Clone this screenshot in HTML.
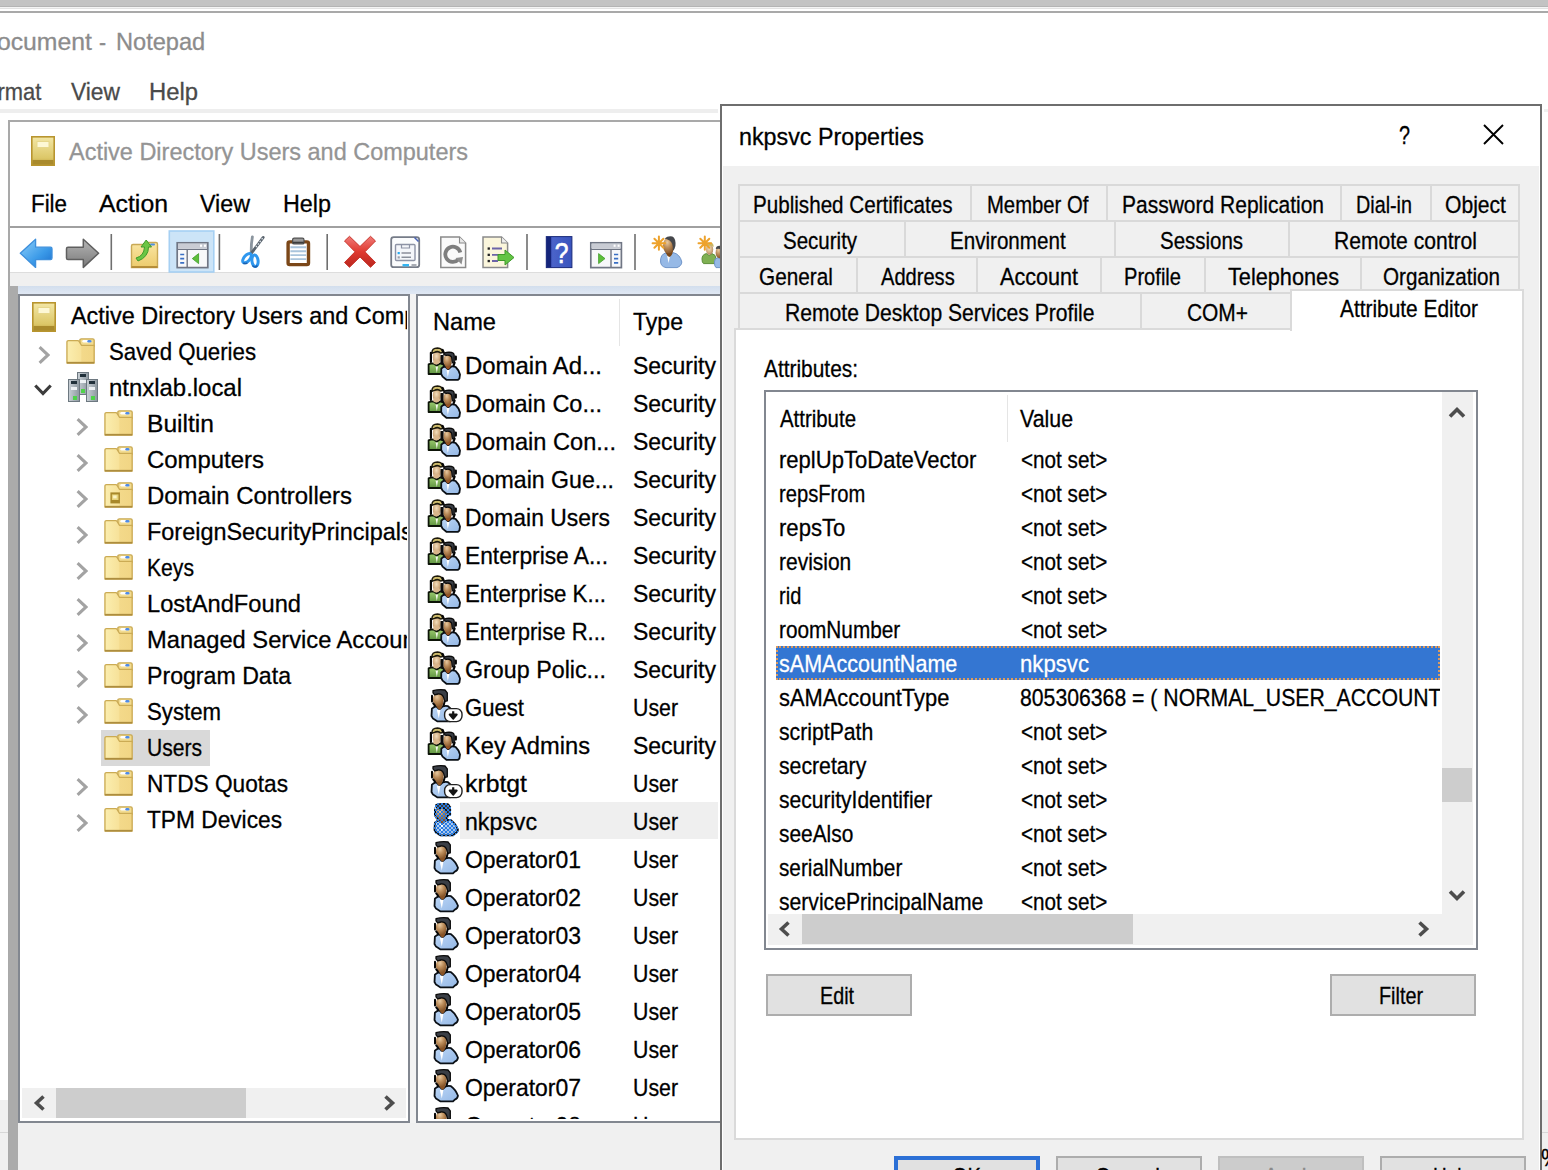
<!DOCTYPE html>
<html lang="en">
<head>
<meta charset="utf-8">
<title>nkpsvc Properties</title>
<style>
html,body{margin:0;padding:0;}
body{width:1548px;height:1170px;overflow:hidden;background:#fff;position:relative;font-family:"Liberation Sans",sans-serif;color:#000;}
.L{position:absolute;left:0;top:0;overflow:hidden;}
.b{position:absolute;box-sizing:border-box;}
.t{position:absolute;white-space:pre;transform-origin:0 50%;font-size:24.2px;line-height:24.2px;display:block;-webkit-text-stroke-width:0.3px;}
.t.dlg{font-size:24.3px;line-height:24.3px;}
svg.i{position:absolute;overflow:visible;}
</style>
</head>
<body>
<svg width="0" height="0" style="position:absolute">
<defs>
<linearGradient id="gGold" x1="0" y1="0" x2="0" y2="1"><stop offset="0" stop-color="#f3e7a6"/><stop offset="0.75" stop-color="#dcc768"/><stop offset="1" stop-color="#b99a35"/></linearGradient>
<linearGradient id="gFold" x1="0" y1="0" x2="0" y2="1"><stop offset="0" stop-color="#f9e6a4"/><stop offset="1" stop-color="#edcb6c"/></linearGradient>
<linearGradient id="gBlueArrow" x1="0" y1="0" x2="0" y2="1"><stop offset="0" stop-color="#7cc4f5"/><stop offset="1" stop-color="#1f7fd6"/></linearGradient>
<linearGradient id="gGrayArrow" x1="0" y1="0" x2="0" y2="1"><stop offset="0" stop-color="#a8a8a8"/><stop offset="1" stop-color="#6e6e6e"/></linearGradient>
<linearGradient id="gBody" x1="0" y1="0" x2="0" y2="1"><stop offset="0" stop-color="#c3d8f0"/><stop offset="1" stop-color="#8fb1da"/></linearGradient>
<linearGradient id="gBodyG" x1="0" y1="0" x2="0" y2="1"><stop offset="0" stop-color="#a9cf8a"/><stop offset="1" stop-color="#6fa24c"/></linearGradient>
<linearGradient id="gSrv" x1="0" y1="0" x2="1" y2="0"><stop offset="0" stop-color="#c9d0d6"/><stop offset="1" stop-color="#8c979f"/></linearGradient>
<!-- folder 28x26 -->
<linearGradient id="gFoldH" x1="0" y1="0" x2="1" y2="0"><stop offset="0" stop-color="#fbeeb0"/><stop offset="0.5" stop-color="#f7e29a"/><stop offset="0.55" stop-color="#f3d98a"/><stop offset="1" stop-color="#f1d584"/></linearGradient>
<symbol id="folder" viewBox="0 0 28 26" preserveAspectRatio="none">
<path d="M13.4 8 V2.2 Q13.4 0.9 14.8 0.9 H25.8 Q27.2 0.9 27.2 2.2 V8 Z" fill="#f3dc90" stroke="#c9a952" stroke-width="1.3"/>
<rect x="15.8" y="1.9" width="8.6" height="2.7" rx="1.3" fill="#fff"/><rect x="20.6" y="1.9" width="4" height="2.7" rx="1.3" fill="#4f8be6"/>
<path d="M0.9 25 V4 Q0.9 2.6 2.4 2.6 H11.4 Q12.3 2.6 12.8 3.6 L14.9 7.3 H27.2 V25 Z" fill="url(#gFoldH)" stroke="#cbab54" stroke-width="1.3" stroke-linejoin="round"/>
<path d="M0.9 24.7 H27.2" stroke="#ad8d3e" stroke-width="1.7"/>
</symbol>
<symbol id="folderdc" viewBox="0 0 28 26" preserveAspectRatio="none">
<use href="#folder" width="28" height="26"/>
<rect x="6.2" y="10.4" width="9.2" height="11" fill="#a8882a"/><rect x="7.6" y="12.4" width="6.4" height="5.6" fill="#e6d27a"/><rect x="8.8" y="13.4" width="3.4" height="3" fill="#fbf4c4"/>
</symbol>
<!-- root icon 24x30 -->
<symbol id="root" viewBox="0 0 24 30">
<rect x="0.8" y="0.8" width="22.4" height="28.4" fill="url(#gGold)" stroke="#b8952f" stroke-width="1.6"/>
<rect x="1.6" y="24" width="20.8" height="4.5" fill="#a98a2c"/>
<rect x="6" y="5.5" width="12" height="6" fill="#fdf8d6" stroke="#e6d78c" stroke-width="1"/>
</symbol>
<!-- domain 30x30 -->
<symbol id="domain" viewBox="0 0 30 30">
<g stroke="#6d7880" stroke-width="1">
<rect x="9.5" y="0.5" width="11" height="22" fill="url(#gSrv)"/>
<rect x="0.5" y="7.5" width="11" height="22" fill="url(#gSrv)"/>
<rect x="18.5" y="7.5" width="11" height="22" fill="url(#gSrv)"/>
</g>
<rect x="12" y="2" width="6" height="3" fill="#20303a"/><rect x="3" y="9" width="6" height="3" fill="#20303a"/><rect x="21" y="9" width="6" height="3" fill="#20303a"/>
<rect x="12" y="8" width="6" height="3" fill="#eef2f5"/><rect x="3" y="15" width="6" height="3" fill="#eef2f5"/><rect x="21" y="15" width="6" height="3" fill="#eef2f5"/>
<rect x="13" y="17" width="4" height="4" fill="#4fd24a"/><rect x="5" y="24" width="4" height="4" fill="#4fd24a"/><rect x="23" y="24" width="4" height="4" fill="#4fd24a"/>
</symbol>
<!-- user 26x34 -->
<radialGradient id="gFace" cx="0.38" cy="0.3" r="0.8"><stop offset="0" stop-color="#e8c9a0"/><stop offset="0.45" stop-color="#b98a58"/><stop offset="1" stop-color="#7a4a20"/></radialGradient>
<radialGradient id="gFaceL" cx="0.45" cy="0.4" r="0.75"><stop offset="0" stop-color="#f3ddbc"/><stop offset="0.55" stop-color="#cfa97c"/><stop offset="1" stop-color="#8f6a44"/></radialGradient>
<linearGradient id="gBody2" x1="0" y1="0" x2="1" y2="1"><stop offset="0" stop-color="#bcd6f6"/><stop offset="1" stop-color="#94b8e6"/></linearGradient>
<linearGradient id="gBodyG2" x1="0" y1="0" x2="0" y2="1"><stop offset="0" stop-color="#9ccc70"/><stop offset="1" stop-color="#5f9440"/></linearGradient>
<symbol id="user" viewBox="0 0 26 34">
<path d="M1.9 19.6 Q4 17.7 6.2 17.4 L9.5 20.4 L12.8 17.4 Q15.5 16.5 18 17.2 Q22.6 20.5 25 26.7 Q24.6 29.6 21.8 30.6 L20 32.4 H7.6 L3 29.6 L1.5 27 Z" fill="url(#gBody2)" stroke="#0b1016" stroke-width="1.8" stroke-linejoin="round"/>
<path d="M6.9 21 L8.8 29.5 L10.4 20.8 Z" fill="#fff"/>
<path d="M5.6 14.5 Q7 20 9.6 20.8 Q12.2 19.5 13.2 13.5 Z" fill="#8a5426"/>
<ellipse cx="8.3" cy="10.7" rx="5.4" ry="6.9" fill="url(#gFace)"/>
<path d="M3 1.7 Q9 0.2 15 1 L17.3 3.8 V11.8 L14.9 12.4 L13.3 7.6 Q11.6 4.6 8 5 L4.6 5.8 L3 3.8 Z" fill="#3a3e45" stroke="#0a0a0a" stroke-width="1.3" stroke-linejoin="round"/>
<path d="M2 6.8 V12.6 M3.2 14.4 L5 16.6 M14.6 12.8 L13.6 16.4" stroke="#050505" stroke-width="2" fill="none" stroke-linecap="round"/>
</symbol>
<pattern id="dither" width="4" height="4" patternUnits="userSpaceOnUse"><rect x="0" y="0" width="2" height="2" fill="#2a7de2"/><rect x="2" y="2" width="2" height="2" fill="#2a7de2"/></pattern>
<symbol id="usersel" viewBox="0 0 26 34">
<use href="#user" width="26" height="34"/>
<g fill="url(#dither)" stroke="url(#dither)" stroke-width="1.8" stroke-linejoin="round">
<path d="M1.9 19.6 Q4 17.7 6.2 17.4 L9.5 20.4 L12.8 17.4 Q15.5 16.5 18 17.2 Q22.6 20.5 25 26.7 Q24.6 29.6 21.8 30.6 L20 32.4 H7.6 L3 29.6 L1.5 27 Z"/>
<path d="M2 6.8 L3 1.7 Q9 0.2 15 1 L17.3 3.8 V11.8 L14.6 12.8 L13.6 17 L9.6 20.8 L5 16.6 L2 12.6 Z"/>
</g>
</symbol>
<!-- group 34x34 -->
<symbol id="group" viewBox="0 0 34 34">
<path d="M1.6 17.4 Q3.5 16.4 6.4 16.4 L9.8 18.6 L13 16.4 Q15.5 16.4 17 17.4 V27 H1.6 Z" fill="url(#gBodyG2)" stroke="#0d1408" stroke-width="1.8" stroke-linejoin="round"/>
<path d="M8.6 19.5 L9.8 26 L11 19.5 Z" fill="#f4f8ee"/>
<ellipse cx="9.8" cy="10.4" rx="4" ry="6.4" fill="url(#gFaceL)"/>
<path d="M6 16 Q9.8 19.5 13 15 L12 13 H7 Z" fill="#d9b58b"/>
<path d="M5 6.2 Q4.6 1 10.5 0.9 Q15.6 1 15.6 5.6 L13.6 6 Q11 3.6 7.4 5.4 Z" fill="#cdbb6c" stroke="#1c180a" stroke-width="1.5" stroke-linejoin="round"/>
<path d="M3.9 5.8 V15 M15.6 3 L16.8 5.6" stroke="#070707" stroke-width="2.2" fill="none" stroke-linecap="round"/><path d="M13.6 8 L16.6 8 L16.8 19 L13.4 17 Z" fill="#0c0c0c"/>
<path d="M14.3 21.6 Q16 19.8 18.2 19.5 L21.2 22.3 L24.4 19.5 Q27 19.2 28.6 20 Q31.6 22.6 33 27.5 L32.4 31.6 L31 32.8 H19.4 L15.6 29.6 L14.2 27 Z" fill="url(#gBody2)" stroke="#0b1016" stroke-width="1.8" stroke-linejoin="round"/>
<path d="M19.6 23 L20.8 30 L22.4 23 Z" fill="#fff"/>
<path d="M17.6 17 Q19 22 21.2 22.6 Q23.6 21.4 24.6 16 Z" fill="#96501f"/>
<ellipse cx="20.7" cy="13.4" rx="4.1" ry="6.4" fill="url(#gFace)"/>
<path d="M16.8 7.6 Q17 5.2 22 5.2 Q27.2 5.4 27.2 8.4 V15.6 L25.4 15.8 L24.6 10 Q22.6 7.6 19.4 8.4 Z" fill="#3a3e45" stroke="#0a0a0a" stroke-width="1.3" stroke-linejoin="round"/>
<path d="M28.8 9.6 V12.6 M27.6 15.6 L26.6 18.4" stroke="#050505" stroke-width="2.2" fill="none" stroke-linecap="round"/>
</symbol>
<symbol id="userg" viewBox="0 0 18 28">
<path d="M1.6 17.4 Q3.5 16.4 6.4 16.4 L9.8 18.6 L13 16.4 Q15.5 16.4 17 17.4 V27 H1.6 Z" fill="url(#gBodyG2)" stroke="#0d1408" stroke-width="1.8" stroke-linejoin="round"/>
<ellipse cx="9.8" cy="10.4" rx="4" ry="6.4" fill="url(#gFaceL)"/>
<path d="M5 6.2 Q4.6 1 10.5 0.9 Q15.6 1 15.6 5.6 L13.6 6 Q11 3.6 7.4 5.4 Z" fill="#dccb7e" stroke="#2a2410" stroke-width="1.2"/>
</symbol>
<!-- disabled user 34x34 -->
<symbol id="userd" viewBox="0 0 34 34">
<use href="#user" x="0" y="0" width="26" height="34"/>
<rect x="14.6" y="19.6" width="17.4" height="13" rx="5.5" fill="#fff" stroke="#222" stroke-width="1.4"/>
<path d="M23.2 22.3 V27 M19.8 25.6 L23.2 29.6 L26.6 25.6 Z" stroke="#151515" stroke-width="2.2" fill="#151515" stroke-linejoin="round"/>
</symbol>
<symbol id="chevR" viewBox="0 0 12 18"><path d="M1.6 1.2 L10 9 L1.6 16.8" fill="none" stroke="#a3a3a3" stroke-width="3.1"/></symbol>
<symbol id="chevD" viewBox="0 0 18 12"><path d="M1.3 1.5 L9 9.6 L16.7 1.5" fill="none" stroke="#3c3c3c" stroke-width="3.1"/></symbol>
</defs>
</svg>

<div class="L" style="width:1548px;height:1170px"><div class="b" style="left:0px;top:0px;width:1548px;height:6px;background:#c3c3c3;"></div>
<div class="b" style="left:0px;top:6px;width:1548px;height:1px;background:#b4b4b4;"></div>
<div class="b" style="left:0px;top:7px;width:1548px;height:1px;background:#f4f4f4;"></div>
<div class="b" style="left:0px;top:8px;width:1548px;height:1px;background:#e2e2e2;"></div>
<div class="b" style="left:0px;top:11px;width:1548px;height:2px;background:#a9a9a9;"></div>
<div class="b" style="left:0px;top:108.5px;width:718px;height:4px;background:#eeeeee;"></div>
<div class="b" style="left:1544px;top:109px;width:4px;height:3px;background:#f0f0f0;"></div>
<div class="b" style="left:0px;top:1100px;width:9px;height:70px;background:#f0f0f0;"></div>
<div class="b" style="left:0px;top:1132px;width:9px;height:1px;background:#d7d7d7;"></div>
<div class="b" style="left:1542px;top:1100px;width:6px;height:70px;background:#f0f0f0;"></div>
<div class="b" style="left:1542px;top:1132px;width:6px;height:1px;background:#d7d7d7;"></div>
<div class="b" style="left:8.4px;top:120.3px;width:1400px;height:1060px;background:#fff;border:2px solid #a9a9a9;"></div>
<svg class="i" style="left:30.5px;top:136.4px" width="24" height="30"><use href="#root" width="24" height="30"/></svg>
<div class="b" style="left:10px;top:226px;width:1396px;height:2px;background:#a0a0a0;"></div>
<div class="b" style="left:10px;top:272px;width:1396px;height:1.7px;background:#dddddd;"></div>
<div class="b" style="left:10px;top:273px;width:1396px;height:13px;background:#f0f0f0;"></div>
<div class="b" style="left:8.5px;top:286px;width:9.5px;height:900px;background:#ababab;"></div>
<div class="b" style="left:18px;top:286px;width:1388px;height:8.3px;background:linear-gradient(#d2deed,#e0e8f4);"></div>
<div class="b" style="left:18px;top:1123px;width:1388px;height:60px;background:#f0f0f0;"></div>
<div class="b" style="left:410px;top:294px;width:6px;height:829px;background:#f3f3f3;"></div>
<div class="b" style="left:18px;top:294px;width:392px;height:829px;background:#fff;border:2px solid #828790;"></div>
<div class="b" style="left:416px;top:294px;width:900px;height:829px;background:#fff;border:2px solid #828790;"></div>
<!-- toolbar -->
<svg class="i" style="left:0;top:228px" width="722" height="46" viewBox="0 228 722 46">
<defs>
<linearGradient id="tbX" x1="0" y1="0" x2="0" y2="1"><stop offset="0" stop-color="#f07b78"/><stop offset="0.5" stop-color="#e03a30"/><stop offset="1" stop-color="#b8261e"/></linearGradient>
<linearGradient id="tbHelp" x1="0" y1="0" x2="1" y2="0"><stop offset="0" stop-color="#1b2f8c"/><stop offset="0.25" stop-color="#4a63c9"/><stop offset="1" stop-color="#3953bd"/></linearGradient>
<linearGradient id="tbBack" x1="0" y1="0" x2="1" y2="1"><stop offset="0" stop-color="#8fd0fa"/><stop offset="0.6" stop-color="#3b9ae8"/><stop offset="1" stop-color="#1c6fcc"/></linearGradient>
<linearGradient id="tbFwd" x1="0" y1="0" x2="0" y2="1"><stop offset="0" stop-color="#b5b5b5"/><stop offset="1" stop-color="#7a7a7a"/></linearGradient>
</defs>
<!-- back -->
<path d="M20.3 253.2 L35.6 239.2 V247.2 H50.5 Q52 247.2 52 248.8 V258 Q52 259.6 50.5 259.6 H35.6 V267.4 Z" fill="url(#tbBack)" stroke="#3d8fdc" stroke-width="1.3" stroke-linejoin="round"/>
<!-- forward -->
<path d="M98.6 253.2 L83.3 239.2 V247.2 H68 Q66.5 247.2 66.5 248.8 V258 Q66.5 259.6 68 259.6 H83.3 V267.4 Z" fill="url(#tbFwd)" stroke="#5f5f5f" stroke-width="1.5" stroke-linejoin="round"/>
<!-- separators -->
<g stroke="#6f6f6f" stroke-width="1.6">
<path d="M111.3 234 V270"/><path d="M219.4 234 V270"/><path d="M327.2 234 V270"/><path d="M527 234 V270"/><path d="M635 234 V270"/>
</g>
<!-- up folder -->
<path d="M131.5 267.5 V246 Q131.5 244.5 133 244.5 H143 L146 242.5 H156 Q157.5 242.5 157.5 244 V267.5 Z" fill="url(#gFold)" stroke="#c9a956" stroke-width="1.4"/>
<path d="M131.5 267 H157.5" stroke="#b18a35" stroke-width="1.8"/>
<rect x="150" y="243.6" width="5" height="2" rx="1" fill="#4f8fe0"/>
<path d="M136 258 Q144 256 144.5 247 H141 L146.2 240 L151.5 247 H148.5 Q148.5 257 138 261 Z" fill="#6cc644" stroke="#3f9a2a" stroke-width="1"/>
<!-- selected button -->
<rect x="169.3" y="231" width="44.5" height="41" fill="#cce4f7" stroke="#a6d0f3" stroke-width="1.6"/>
<g>
<rect x="177.2" y="242.8" width="30.6" height="24.8" fill="#f7f8fa" stroke="#707684" stroke-width="1.7"/>
<rect x="178" y="243.6" width="29" height="4.6" fill="#c9ccd4"/>
<path d="M177.2 249.4 H207.8 M187.2 250 V267" stroke="#707684" stroke-width="1.4"/>
<rect x="200" y="244.6" width="2" height="2.2" fill="#fff"/><rect x="204" y="244.6" width="2" height="2.2" fill="#fff"/>
<path d="M180.2 254.5 H184.2 M180.2 258.7 H184.2 M180.2 262.9 H184.2" stroke="#3a6fc4" stroke-width="1.7"/>
<path d="M192.3 258.6 L198.6 253.6 V263.6 Z" fill="#5cbf3a" stroke="#3f9a2a" stroke-width="0.8"/>
</g>
<!-- scissors -->
<path d="M252.4 236.8 Q251 244 251.2 252.5" stroke="#8a949e" stroke-width="2.8" stroke-linecap="round" fill="none"/>
<path d="M263.2 237.4 L251.4 253.2" stroke="#59636d" stroke-width="2.8" stroke-linecap="round"/>
<path d="M262.6 238.2 L255 248.4" stroke="#e8eef3" stroke-width="1.2" stroke-dasharray="1.6 1.6"/>
<ellipse cx="247" cy="258.2" rx="5.6" ry="2.9" transform="rotate(-48 247 258.2)" fill="#fff" stroke="#2f97ee" stroke-width="3"/>
<ellipse cx="255" cy="260.8" rx="3.1" ry="5.8" transform="rotate(-6 255 260.8)" fill="#fff" stroke="#2f97ee" stroke-width="3"/>
<path d="M243.4 263 Q245.2 264.2 247.4 262.8 M252.4 265.6 Q255 268.6 257.4 265.4" stroke="#1b5fae" stroke-width="1.6" fill="none"/>
<!-- clipboard -->
<rect x="288.1" y="241.9" width="20.4" height="22.7" rx="1.6" fill="#fff" stroke="#7b4718" stroke-width="3.4"/>
<path d="M290.4 247.2 H306.2 M290.4 251.2 H306.2 M290.4 255.1 H306.2 M290.4 259.1 H306.2" stroke="#a9c4dc" stroke-width="1.9"/>
<rect x="292.6" y="238.2" width="11.4" height="5.8" rx="1.6" fill="#9a9a9a" stroke="#4e4e4e" stroke-width="1.2"/>
<path d="M292.8 242.6 H303.8" stroke="#3d3d3d" stroke-width="1.8"/>
<!-- delete X -->
<path d="M344.5 241 L349.5 236.3 L360 246.5 L370.5 236.3 L375.5 241 L365 251.8 L375.5 262.5 L370.5 267.3 L360 257 L349.5 267.3 L344.5 262.5 L355 251.8 Z" fill="url(#tbX)" stroke="#c8372e" stroke-width="1" stroke-linejoin="round"/>
<!-- properties -->
<rect x="391.2" y="237.2" width="28" height="30" rx="2.5" fill="#fbfcfd" stroke="#767c88" stroke-width="1.8"/>
<rect x="395.5" y="244.5" width="19.5" height="16" rx="1" fill="#f4f6fa" stroke="#8d93a5" stroke-width="1.4"/>
<path d="M401.5 244.5 V248 H409.5 V244.5" fill="none" stroke="#8d93a5" stroke-width="1.2"/>
<path d="M401.5 253 H411 M401.5 257.3 H411" stroke="#8a8f9b" stroke-width="1.6"/>
<rect x="397.6" y="252" width="2.2" height="2.2" fill="#27a9f0"/><rect x="397.6" y="256.3" width="2.2" height="2.2" fill="#9aa0ad"/>
<rect x="402.5" y="264" width="6.5" height="2.4" fill="#35b5f2"/><rect x="411.5" y="264" width="5" height="2.4" fill="#a9adb5"/>
<path d="M414.5 237.5 L418.5 241.5" stroke="#4a63b5" stroke-width="1.6"/>
<!-- refresh -->
<path d="M440.8 237 H459.5 L465.6 243 V267.4 H440.8 Z" fill="#fafafa" stroke="#8a8a8a" stroke-width="1.5"/>
<path d="M459.5 237 V243 H465.6" fill="#e8e8e8" stroke="#8a8a8a" stroke-width="1.1"/>
<path d="M460.3 252.5 A7.6 7.6 0 1 0 458.5 259.5" fill="none" stroke="#7e7e7e" stroke-width="3.8"/>
<path d="M455.5 258 L463 257 L461.5 264.5 Z" fill="#8e8e8e"/>
<!-- export -->
<path d="M483 237 H501.5 L507.6 243 V267.4 H483 Z" fill="#fbf6dc" stroke="#8a8a8a" stroke-width="1.5"/>
<path d="M501.5 237 V243 H507.6" fill="#efefef" stroke="#8a8a8a" stroke-width="1.1"/>
<path d="M492 248.5 H502 M492 254.8 H498 M492 261 H498" stroke="#6d64a8" stroke-width="1.8"/>
<rect x="487.6" y="247.4" width="2.3" height="2.3" fill="#222"/><rect x="487.6" y="253.7" width="2.3" height="2.3" fill="#222"/><rect x="487.6" y="259.9" width="2.3" height="2.3" fill="#222"/>
<path d="M498 254.5 H505 V250 L514 257.5 L505 265 V260.5 H498 Z" fill="#63c445" stroke="#3f9a2a" stroke-width="1"/>
<!-- help -->
<rect x="546.3" y="236.6" width="25.6" height="31" fill="url(#tbHelp)" stroke="#1a2a7a" stroke-width="1"/>
<rect x="546.6" y="237" width="4.5" height="30.2" fill="#14247a"/>
<text transform="translate(561.6 263.4) scale(0.82 1)" x="0" y="0" font-family="Liberation Sans, sans-serif" font-size="30" fill="#fff" stroke="#fff" stroke-width="0.7" text-anchor="middle">?</text>
<!-- action pane -->
<rect x="590.8" y="242.8" width="30.6" height="24.8" fill="#f7f8fa" stroke="#707684" stroke-width="1.7"/>
<rect x="591.6" y="243.6" width="29" height="4.6" fill="#c9ccd4"/>
<path d="M590.8 249.4 H621.4 M611 250 V267" stroke="#707684" stroke-width="1.4"/>
<rect x="613.6" y="244.6" width="2" height="2.2" fill="#fff"/><rect x="617.6" y="244.6" width="2" height="2.2" fill="#fff"/>
<path d="M614 254.5 H618.2 M614 258.7 H618.2 M614 262.9 H618.2" stroke="#3a6fc4" stroke-width="1.7"/>
<path d="M605 258.6 L598.6 253.6 V263.6 Z" fill="#5cbf3a" stroke="#3f9a2a" stroke-width="0.8"/>
<!-- new user -->
<path d="M660.6 262 Q660 254.5 666 252.8 L669.5 256 L673 252.6 Q680 254 681.8 262 Q681.6 266 677 267.6 H666 Q661 266.6 660.6 262 Z" fill="#96b9e6" stroke="#6f94c8" stroke-width="1"/>
<path d="M666.8 254.5 L668.6 263 L670.4 254.5 Z" fill="#fff"/>
<path d="M664.6 249 Q666 256 669.4 257 Q672.6 256 673.6 248 Z" fill="#7a4717"/>
<ellipse cx="668.6" cy="245.5" rx="5.6" ry="8" fill="url(#gFace)"/>
<path d="M664.6 238.6 Q668 235.4 672.4 236.4 Q676.2 238.4 675.4 246 Q674.6 250 672.8 251 Q673.6 243 669.6 240.4 Q666.6 239.4 664.6 238.6 Z" fill="#45474b"/>
<g stroke="#eda22c" stroke-width="2" stroke-linecap="round"><path d="M652.6 243.2 H665.2 M658.9 236.6 V249.8 M654.4 238.7 L663.4 247.7 M663.4 238.7 L654.4 247.7"/></g>
<!-- new group -->
<path d="M702 259 Q702 254.5 706.5 253.6 L709.2 255.6 L712 253.6 Q716 254.5 716 259 V263.6 H703.5 Q702 262.6 702 259 Z" fill="#7fb052" stroke="#5d8f3a" stroke-width="1"/>
<ellipse cx="709.6" cy="249.4" rx="3.6" ry="5.4" fill="url(#gFaceL)"/>
<path d="M706 246.6 Q706 242.6 710 242.6 Q714 242.8 713.6 247 Q711 244.6 706 246.6 Z" fill="#c9b868"/>
<path d="M714.4 262 Q714.6 258 718 257.6 L720 259 L722 257.6 Q726 258.4 726 263 V267.6 H716 Q714.4 266.6 714.4 262 Z" fill="#96b9e6" stroke="#6f94c8" stroke-width="1"/>
<ellipse cx="719.4" cy="252.4" rx="3.8" ry="5.8" fill="url(#gFace)"/>
<path d="M715.8 249 Q716 245.6 720 245.8 Q724 246 723.4 252 Q721.4 247.6 715.8 249 Z" fill="#45474b"/>
<g stroke="#eda22c" stroke-width="2" stroke-linecap="round"><path d="M698.5 243.2 H711.1 M704.8 236.6 V249.8 M700.3 238.7 L709.3 247.7 M709.3 238.7 L700.3 247.7"/></g>
</svg>

<span class="t ui" style="left:-21px;top:30.01px;color:#8c8c8c;transform:scaleX(1.0249)">Document</span>
<span class="t ui" style="left:99.4px;top:30.01px;color:#8c8c8c;transform:scaleX(0.8806)">-</span>
<span class="t ui" style="left:115.8px;top:30.01px;color:#8c8c8c;transform:scaleX(0.9754)">Notepad</span>
<span class="t ui" style="left:-27.8px;top:80.41px;color:#4a4a4a;transform:scaleX(0.9051)">Format</span>
<span class="t ui" style="left:71px;top:80.41px;color:#4a4a4a;transform:scaleX(0.9423)">View</span>
<span class="t ui" style="left:149px;top:80.41px;color:#4a4a4a;transform:scaleX(0.9849)">Help</span>
<span class="t ui" style="left:69px;top:139.71px;color:#949494;transform:scaleX(0.9700)">Active Directory Users and Computers</span>
<span class="t ui" style="left:31px;top:191.91px;transform:scaleX(0.9234)">File</span>
<span class="t ui" style="left:99px;top:191.91px;transform:scaleX(1.0263)">Action</span>
<span class="t ui" style="left:200px;top:191.91px;transform:scaleX(0.9615)">View</span>
<span class="t ui" style="left:283px;top:191.91px;transform:scaleX(0.9648)">Help</span>
</div>
<div class="L" style="width:408px;height:1121px"><div class="L" style="width:406.5px;height:1086px"><div class="b" style="left:100.5px;top:730px;width:109.5px;height:35.5px;background:#d9d9d9;"></div>
<svg class="i" style="left:32px;top:301.5px" width="24" height="30"><use href="#root" width="24" height="30"/></svg>
<svg class="i" style="left:66px;top:338px" width="29" height="26"><use href="#folder" width="29" height="26"/></svg>
<svg class="i" style="left:38.3px;top:346.2px" width="12" height="18"><use href="#chevR" width="12" height="18"/></svg>
<svg class="i" style="left:68px;top:372px" width="30" height="30"><use href="#domain" width="30" height="30"/></svg>
<svg class="i" style="left:34.3px;top:384px" width="18" height="12"><use href="#chevD" width="18" height="12"/></svg>
<svg class="i" style="left:104px;top:410px" width="29" height="26"><use href="#folder" width="29" height="26"/></svg>
<svg class="i" style="left:76.3px;top:418.2px" width="12" height="18"><use href="#chevR" width="12" height="18"/></svg>
<svg class="i" style="left:104px;top:446px" width="29" height="26"><use href="#folder" width="29" height="26"/></svg>
<svg class="i" style="left:76.3px;top:454.2px" width="12" height="18"><use href="#chevR" width="12" height="18"/></svg>
<svg class="i" style="left:104px;top:482px" width="29" height="26"><use href="#folderdc" width="29" height="26"/></svg>
<svg class="i" style="left:76.3px;top:490.2px" width="12" height="18"><use href="#chevR" width="12" height="18"/></svg>
<svg class="i" style="left:104px;top:518px" width="29" height="26"><use href="#folder" width="29" height="26"/></svg>
<svg class="i" style="left:76.3px;top:526.2px" width="12" height="18"><use href="#chevR" width="12" height="18"/></svg>
<svg class="i" style="left:104px;top:554px" width="29" height="26"><use href="#folder" width="29" height="26"/></svg>
<svg class="i" style="left:76.3px;top:562.2px" width="12" height="18"><use href="#chevR" width="12" height="18"/></svg>
<svg class="i" style="left:104px;top:590px" width="29" height="26"><use href="#folder" width="29" height="26"/></svg>
<svg class="i" style="left:76.3px;top:598.2px" width="12" height="18"><use href="#chevR" width="12" height="18"/></svg>
<svg class="i" style="left:104px;top:626px" width="29" height="26"><use href="#folder" width="29" height="26"/></svg>
<svg class="i" style="left:76.3px;top:634.2px" width="12" height="18"><use href="#chevR" width="12" height="18"/></svg>
<svg class="i" style="left:104px;top:662px" width="29" height="26"><use href="#folder" width="29" height="26"/></svg>
<svg class="i" style="left:76.3px;top:670.2px" width="12" height="18"><use href="#chevR" width="12" height="18"/></svg>
<svg class="i" style="left:104px;top:698px" width="29" height="26"><use href="#folder" width="29" height="26"/></svg>
<svg class="i" style="left:76.3px;top:706.2px" width="12" height="18"><use href="#chevR" width="12" height="18"/></svg>
<svg class="i" style="left:104px;top:734px" width="29" height="26"><use href="#folder" width="29" height="26"/></svg>
<svg class="i" style="left:104px;top:770px" width="29" height="26"><use href="#folder" width="29" height="26"/></svg>
<svg class="i" style="left:76.3px;top:778.2px" width="12" height="18"><use href="#chevR" width="12" height="18"/></svg>
<svg class="i" style="left:104px;top:806px" width="29" height="26"><use href="#folder" width="29" height="26"/></svg>
<svg class="i" style="left:76.3px;top:814.2px" width="12" height="18"><use href="#chevR" width="12" height="18"/></svg><span class="t ui" style="left:71px;top:304.11px;transform:scaleX(0.9683)">Active Directory Users and Computers [DC01.ntnxlab.local]</span>
<span class="t ui" style="left:109px;top:340.11px;transform:scaleX(0.9187)">Saved Queries</span>
<span class="t ui" style="left:109px;top:376.11px;transform:scaleX(0.9891)">ntnxlab.local</span>
<span class="t ui" style="left:147px;top:412.11px;transform:scaleX(1.0168)">Builtin</span>
<span class="t ui" style="left:147px;top:448.11px;transform:scaleX(0.9890)">Computers</span>
<span class="t ui" style="left:147px;top:484.11px;transform:scaleX(0.9903)">Domain Controllers</span>
<span class="t ui" style="left:147px;top:520.11px;transform:scaleX(0.9689)">ForeignSecurityPrincipals</span>
<span class="t ui" style="left:147px;top:556.11px;transform:scaleX(0.8739)">Keys</span>
<span class="t ui" style="left:147px;top:592.11px;transform:scaleX(0.9787)">LostAndFound</span>
<span class="t ui" style="left:147px;top:628.11px;transform:scaleX(0.9791)">Managed Service Accounts</span>
<span class="t ui" style="left:147px;top:664.11px;transform:scaleX(0.9564)">Program Data</span>
<span class="t ui" style="left:147px;top:700.11px;transform:scaleX(0.9175)">System</span>
<span class="t ui" style="left:147px;top:736.11px;transform:scaleX(0.8706)">Users</span>
<span class="t ui" style="left:147px;top:772.11px;transform:scaleX(0.9366)">NTDS Quotas</span>
<span class="t ui" style="left:147px;top:808.11px;transform:scaleX(0.9387)">TPM Devices</span></div>
<div class="b" style="left:22px;top:1088px;width:384px;height:30px;background:#f0f0f0;"></div>
<div class="b" style="left:56px;top:1088px;width:190px;height:30px;background:#cdcdcd;"></div>
<svg class="i" style="left:31.5px;top:1094px" width="14" height="18"><path d="M11.5 2.5 L4.5 9 L11.5 15.5" fill="none" stroke="#4d4d4d" stroke-width="3.6"/></svg>
<svg class="i" style="left:383px;top:1094px" width="14" height="18"><path d="M2.5 2.5 L9.5 9 L2.5 15.5" fill="none" stroke="#4d4d4d" stroke-width="3.6"/></svg></div>
<div class="L" style="width:720px;height:1119px"><div class="b" style="left:619px;top:299px;width:1px;height:47px;background:#e5e5e5;"></div>
<svg class="i" style="left:427px;top:347px" width="34" height="34"><use href="#group" width="34" height="34"/></svg>
<svg class="i" style="left:427px;top:385px" width="34" height="34"><use href="#group" width="34" height="34"/></svg>
<svg class="i" style="left:427px;top:423px" width="34" height="34"><use href="#group" width="34" height="34"/></svg>
<svg class="i" style="left:427px;top:461px" width="34" height="34"><use href="#group" width="34" height="34"/></svg>
<svg class="i" style="left:427px;top:499px" width="34" height="34"><use href="#group" width="34" height="34"/></svg>
<svg class="i" style="left:427px;top:537px" width="34" height="34"><use href="#group" width="34" height="34"/></svg>
<svg class="i" style="left:427px;top:575px" width="34" height="34"><use href="#group" width="34" height="34"/></svg>
<svg class="i" style="left:427px;top:613px" width="34" height="34"><use href="#group" width="34" height="34"/></svg>
<svg class="i" style="left:427px;top:651px" width="34" height="34"><use href="#group" width="34" height="34"/></svg>
<svg class="i" style="left:430px;top:689px" width="34" height="34"><use href="#userd" width="34" height="34"/></svg>
<svg class="i" style="left:427px;top:727px" width="34" height="34"><use href="#group" width="34" height="34"/></svg>
<svg class="i" style="left:430px;top:765px" width="34" height="34"><use href="#userd" width="34" height="34"/></svg>
<div class="b" style="left:460.3px;top:802.2px;width:257.7px;height:37.3px;background:#efefef;"></div>
<svg class="i" style="left:433px;top:803px" width="26" height="34"><use href="#usersel" width="26" height="34"/></svg>
<svg class="i" style="left:433px;top:841px" width="26" height="34"><use href="#user" width="26" height="34"/></svg>
<svg class="i" style="left:433px;top:879px" width="26" height="34"><use href="#user" width="26" height="34"/></svg>
<svg class="i" style="left:433px;top:917px" width="26" height="34"><use href="#user" width="26" height="34"/></svg>
<svg class="i" style="left:433px;top:955px" width="26" height="34"><use href="#user" width="26" height="34"/></svg>
<svg class="i" style="left:433px;top:993px" width="26" height="34"><use href="#user" width="26" height="34"/></svg>
<svg class="i" style="left:433px;top:1031px" width="26" height="34"><use href="#user" width="26" height="34"/></svg>
<svg class="i" style="left:433px;top:1069px" width="26" height="34"><use href="#user" width="26" height="34"/></svg>
<svg class="i" style="left:433px;top:1107px" width="26" height="34"><use href="#user" width="26" height="34"/></svg><span class="t ui" style="left:433px;top:310.11px;transform:scaleX(0.9763)">Name</span>
<span class="t ui" style="left:633px;top:310.11px;transform:scaleX(0.9535)">Type</span>
<span class="t ui" style="left:465px;top:354.11px;transform:scaleX(0.9893)">Domain Ad...</span>
<span class="t ui" style="left:633px;top:354.11px;transform:scaleX(0.9499)">Security Group...</span>
<span class="t ui" style="left:465px;top:392.11px;transform:scaleX(0.9706)">Domain Co...</span>
<span class="t ui" style="left:633px;top:392.11px;transform:scaleX(0.9499)">Security Group...</span>
<span class="t ui" style="left:465px;top:430.11px;transform:scaleX(0.9767)">Domain Con...</span>
<span class="t ui" style="left:633px;top:430.11px;transform:scaleX(0.9499)">Security Group...</span>
<span class="t ui" style="left:465px;top:468.11px;transform:scaleX(0.9554)">Domain Gue...</span>
<span class="t ui" style="left:633px;top:468.11px;transform:scaleX(0.9499)">Security Group...</span>
<span class="t ui" style="left:465px;top:506.11px;transform:scaleX(0.9463)">Domain Users</span>
<span class="t ui" style="left:633px;top:506.11px;transform:scaleX(0.9499)">Security Group...</span>
<span class="t ui" style="left:465px;top:544.11px;transform:scaleX(0.9413)">Enterprise A...</span>
<span class="t ui" style="left:633px;top:544.11px;transform:scaleX(0.9499)">Security Group...</span>
<span class="t ui" style="left:465px;top:582.11px;transform:scaleX(0.9200)">Enterprise K...</span>
<span class="t ui" style="left:633px;top:582.11px;transform:scaleX(0.9499)">Security Group...</span>
<span class="t ui" style="left:465px;top:620.11px;transform:scaleX(0.9121)">Enterprise R...</span>
<span class="t ui" style="left:633px;top:620.11px;transform:scaleX(0.9499)">Security Group...</span>
<span class="t ui" style="left:465px;top:658.11px;transform:scaleX(0.9623)">Group Polic...</span>
<span class="t ui" style="left:633px;top:658.11px;transform:scaleX(0.9499)">Security Group...</span>
<span class="t ui" style="left:465px;top:696.11px;transform:scaleX(0.9141)">Guest</span>
<span class="t ui" style="left:633px;top:696.11px;transform:scaleX(0.8810)">User</span>
<span class="t ui" style="left:465px;top:734.11px;transform:scaleX(0.9787)">Key Admins</span>
<span class="t ui" style="left:633px;top:734.11px;transform:scaleX(0.9499)">Security Group...</span>
<span class="t ui" style="left:465px;top:772.11px;transform:scaleX(1.0248)">krbtgt</span>
<span class="t ui" style="left:633px;top:772.11px;transform:scaleX(0.8810)">User</span>
<span class="t ui" style="left:465px;top:810.11px;transform:scaleX(0.9564)">nkpsvc</span>
<span class="t ui" style="left:633px;top:810.11px;transform:scaleX(0.8810)">User</span>
<span class="t ui" style="left:465px;top:848.11px;transform:scaleX(0.9480)">Operator01</span>
<span class="t ui" style="left:633px;top:848.11px;transform:scaleX(0.8810)">User</span>
<span class="t ui" style="left:465px;top:886.11px;transform:scaleX(0.9480)">Operator02</span>
<span class="t ui" style="left:633px;top:886.11px;transform:scaleX(0.8810)">User</span>
<span class="t ui" style="left:465px;top:924.11px;transform:scaleX(0.9480)">Operator03</span>
<span class="t ui" style="left:633px;top:924.11px;transform:scaleX(0.8810)">User</span>
<span class="t ui" style="left:465px;top:962.11px;transform:scaleX(0.9480)">Operator04</span>
<span class="t ui" style="left:633px;top:962.11px;transform:scaleX(0.8810)">User</span>
<span class="t ui" style="left:465px;top:1000.11px;transform:scaleX(0.9480)">Operator05</span>
<span class="t ui" style="left:633px;top:1000.11px;transform:scaleX(0.8810)">User</span>
<span class="t ui" style="left:465px;top:1038.11px;transform:scaleX(0.9480)">Operator06</span>
<span class="t ui" style="left:633px;top:1038.11px;transform:scaleX(0.8810)">User</span>
<span class="t ui" style="left:465px;top:1076.11px;transform:scaleX(0.9480)">Operator07</span>
<span class="t ui" style="left:633px;top:1076.11px;transform:scaleX(0.8810)">User</span>
<span class="t ui" style="left:465px;top:1114.11px;transform:scaleX(0.9480)">Operator08</span>
<span class="t ui" style="left:633px;top:1114.11px;transform:scaleX(0.8810)">User</span></div>
<div class="L" style="width:1548px;height:1170px"><div class="b" style="left:720px;top:104px;width:822px;height:1100px;background:#fff;border:2px solid #6e6e6e;"></div>
<div class="b" style="left:723.3px;top:166px;width:815.4px;height:1020px;background:#f0f0f0;"></div>
<svg class="i" style="left:1483px;top:124px" width="21" height="21"><path d="M1 1 L20 20 M20 1 L1 20" stroke="#000" stroke-width="1.9" fill="none"/></svg>
<div class="b" style="left:738px;top:184px;width:782px;height:110px;background:#f0f0f0;border:2px solid #d9d9d9;border-bottom:none;"></div>
<div class="b" style="left:738px;top:220px;width:782px;height:2px;background:#d9d9d9;"></div>
<div class="b" style="left:738px;top:256px;width:782px;height:2px;background:#d9d9d9;"></div>
<div class="b" style="left:738px;top:292px;width:782px;height:2px;background:#d9d9d9;"></div>
<div class="b" style="left:970.3px;top:184px;width:2px;height:38px;background:#d9d9d9;"></div>
<div class="b" style="left:1106.3px;top:184px;width:2px;height:38px;background:#d9d9d9;"></div>
<div class="b" style="left:1340.3px;top:184px;width:2px;height:38px;background:#d9d9d9;"></div>
<div class="b" style="left:1430.3px;top:184px;width:2px;height:38px;background:#d9d9d9;"></div>
<div class="b" style="left:904.3px;top:220px;width:2px;height:38px;background:#d9d9d9;"></div>
<div class="b" style="left:1114.3px;top:220px;width:2px;height:38px;background:#d9d9d9;"></div>
<div class="b" style="left:1288.3px;top:220px;width:2px;height:38px;background:#d9d9d9;"></div>
<div class="b" style="left:856.3px;top:256px;width:2px;height:38px;background:#d9d9d9;"></div>
<div class="b" style="left:976.3px;top:256px;width:2px;height:38px;background:#d9d9d9;"></div>
<div class="b" style="left:1100.3px;top:256px;width:2px;height:38px;background:#d9d9d9;"></div>
<div class="b" style="left:1204.3px;top:256px;width:2px;height:38px;background:#d9d9d9;"></div>
<div class="b" style="left:1360.3px;top:256px;width:2px;height:38px;background:#d9d9d9;"></div>
<div class="b" style="left:1140.3px;top:292px;width:2px;height:38px;background:#d9d9d9;"></div>
<div class="b" style="left:738px;top:292px;width:554px;height:38px;border:2px solid #d9d9d9;"></div>
<div class="b" style="left:734px;top:328px;width:790px;height:812px;background:#fff;border:2px solid #dadada;"></div>
<div class="b" style="left:1290px;top:289px;width:234px;height:42px;background:#fff;border:2px solid #dadada;border-bottom:none;"></div>
<div class="b" style="left:1292px;top:326px;width:230px;height:6px;background:#fff;"></div>
<div class="b" style="left:764px;top:390px;width:714px;height:560px;background:#fff;border:2px solid #828790;"></div>
<div class="b" style="left:1007px;top:395px;width:1px;height:47px;background:#e5e5e5;"></div>
<div class="b" style="left:1442px;top:392px;width:31px;height:553px;background:#f0f0f0;"></div>
<div class="b" style="left:1442px;top:768px;width:29.5px;height:34px;background:#cdcdcd;"></div>
<svg class="i" style="left:1448px;top:405px" width="18" height="14"><path d="M2 11.5 L9 4.5 L16 11.5" fill="none" stroke="#4d4d4d" stroke-width="3.6"/></svg>
<svg class="i" style="left:1447.7px;top:888.5px" width="18" height="14"><path d="M2 2.5 L9 9.5 L16 2.5" fill="none" stroke="#4d4d4d" stroke-width="3.6"/></svg>
<div class="b" style="left:768px;top:914px;width:674px;height:31px;background:#f0f0f0;"></div>
<div class="b" style="left:802px;top:914px;width:331px;height:30px;background:#cdcdcd;"></div>
<svg class="i" style="left:776.5px;top:919.7px" width="14" height="18"><path d="M11.5 2.5 L4.5 9 L11.5 15.5" fill="none" stroke="#4d4d4d" stroke-width="3.6"/></svg>
<svg class="i" style="left:1416.5px;top:919.7px" width="14" height="18"><path d="M2.5 2.5 L9.5 9 L2.5 15.5" fill="none" stroke="#4d4d4d" stroke-width="3.6"/></svg>
<div class="b" style="left:766px;top:974px;width:146px;height:42px;background:#e1e1e1;border:2px solid #adadad;"></div>
<div class="b" style="left:1330px;top:974px;width:146px;height:42px;background:#e1e1e1;border:2px solid #adadad;"></div>
<div class="b" style="left:894px;top:1156px;width:146px;height:42px;background:#e1e1e1;border:4px solid #2c70d6;"></div>
<div class="b" style="left:1056px;top:1156px;width:146px;height:42px;background:#e1e1e1;border:2px solid #adadad;"></div>
<div class="b" style="left:1218px;top:1156px;width:146px;height:42px;background:#cccccc;border:2px solid #bfbfbf;"></div>
<div class="b" style="left:1380px;top:1156px;width:146px;height:42px;background:#e1e1e1;border:2px solid #adadad;"></div><span class="t ui" style="left:739px;top:124.51px;transform:scaleX(0.9623)">nkpsvc Properties</span>
<span class="t ui" style="left:1398.5px;top:122.29px;font-size:26px;line-height:26px;transform:scaleX(0.7603)">?</span>
<span class="t dlg" style="left:752.7px;top:192.53px;transform:scaleX(0.8489)">Published Certificates</span>
<span class="t dlg" style="left:986.6px;top:192.53px;transform:scaleX(0.8336)">Member Of</span>
<span class="t dlg" style="left:1122px;top:192.53px;transform:scaleX(0.8646)">Password Replication</span>
<span class="t dlg" style="left:1356px;top:192.53px;transform:scaleX(0.8133)">Dial-in</span>
<span class="t dlg" style="left:1445px;top:192.53px;transform:scaleX(0.8685)">Object</span>
<span class="t dlg" style="left:782.5px;top:228.53px;transform:scaleX(0.8441)">Security</span>
<span class="t dlg" style="left:950.4px;top:228.53px;transform:scaleX(0.8475)">Environment</span>
<span class="t dlg" style="left:1160px;top:228.53px;transform:scaleX(0.8418)">Sessions</span>
<span class="t dlg" style="left:1334px;top:228.53px;transform:scaleX(0.8679)">Remote control</span>
<span class="t dlg" style="left:759px;top:264.53px;transform:scaleX(0.8536)">General</span>
<span class="t dlg" style="left:880.6px;top:264.53px;transform:scaleX(0.8268)">Address</span>
<span class="t dlg" style="left:1000px;top:264.53px;transform:scaleX(0.8884)">Account</span>
<span class="t dlg" style="left:1124px;top:264.53px;transform:scaleX(0.8276)">Profile</span>
<span class="t dlg" style="left:1228px;top:264.53px;transform:scaleX(0.8930)">Telephones</span>
<span class="t dlg" style="left:1383px;top:264.53px;transform:scaleX(0.8493)">Organization</span>
<span class="t dlg" style="left:784.8px;top:300.53px;transform:scaleX(0.8682)">Remote Desktop Services Profile</span>
<span class="t dlg" style="left:1187px;top:300.53px;transform:scaleX(0.8607)">COM+</span>
<span class="t dlg" style="left:1340px;top:296.53px;transform:scaleX(0.8586)">Attribute Editor</span>
<span class="t dlg" style="left:764px;top:356.53px;transform:scaleX(0.8593)">Attributes:</span>
<span class="t dlg" style="left:780px;top:406.53px;transform:scaleX(0.8398)">Attribute</span>
<span class="t dlg" style="left:1020px;top:406.53px;transform:scaleX(0.8783)">Value</span>
<span class="t dlg" style="left:820px;top:983.53px;transform:scaleX(0.8119)">Edit</span>
<span class="t dlg" style="left:1379px;top:983.53px;transform:scaleX(0.8148)">Filter</span>
<span class="t dlg" style="left:952px;top:1164.53px;transform:scaleX(0.8260)">OK</span>
<span class="t dlg" style="left:1095px;top:1164.53px;transform:scaleX(0.8593)">Cancel</span>
<span class="t dlg" style="left:1264px;top:1164.53px;color:#8a8a8a;transform:scaleX(0.8720)">Apply</span>
<span class="t dlg" style="left:1433px;top:1164.53px;transform:scaleX(0.7802)">Help</span>
<span class="t ui" style="left:1540.5px;top:1145.68px;font-size:24px;line-height:24px;transform:scaleX(0.9136)">%</span>
<div class="L" style="width:1440px;height:914px"><div class="b" style="left:776px;top:646px;width:664px;height:34px;background:#3476d2;border:2px dotted #dd9a5c;"></div><span class="t dlg" style="left:778.7px;top:448.03px;transform:scaleX(0.9073)">replUpToDateVector</span>
<span class="t dlg" style="left:1020.5px;top:448.03px;transform:scaleX(0.8517)">&lt;not set&gt;</span>
<span class="t dlg" style="left:778.7px;top:482.03px;transform:scaleX(0.8302)">repsFrom</span>
<span class="t dlg" style="left:1020.5px;top:482.03px;transform:scaleX(0.8517)">&lt;not set&gt;</span>
<span class="t dlg" style="left:778.7px;top:516.03px;transform:scaleX(0.9090)">repsTo</span>
<span class="t dlg" style="left:1020.5px;top:516.03px;transform:scaleX(0.8517)">&lt;not set&gt;</span>
<span class="t dlg" style="left:778.7px;top:550.03px;transform:scaleX(0.8634)">revision</span>
<span class="t dlg" style="left:1020.5px;top:550.03px;transform:scaleX(0.8517)">&lt;not set&gt;</span>
<span class="t dlg" style="left:778.7px;top:584.03px;transform:scaleX(0.8254)">rid</span>
<span class="t dlg" style="left:1020.5px;top:584.03px;transform:scaleX(0.8517)">&lt;not set&gt;</span>
<span class="t dlg" style="left:778.7px;top:618.03px;transform:scaleX(0.8555)">roomNumber</span>
<span class="t dlg" style="left:1020.5px;top:618.03px;transform:scaleX(0.8517)">&lt;not set&gt;</span>
<span class="t dlg" style="left:778.7px;top:652.03px;color:#fff;transform:scaleX(0.8862)">sAMAccountName</span>
<span class="t dlg" style="left:1020px;top:652.03px;color:#fff;transform:scaleX(0.9124)">nkpsvc</span>
<span class="t dlg" style="left:778.7px;top:686.03px;transform:scaleX(0.9008)">sAMAccountType</span>
<span class="t dlg" style="left:1020px;top:686.03px;transform:scaleX(0.8731)">805306368 = ( NORMAL_USER_ACCOUNT )</span>
<span class="t dlg" style="left:778.7px;top:720.03px;transform:scaleX(0.8729)">scriptPath</span>
<span class="t dlg" style="left:1020.5px;top:720.03px;transform:scaleX(0.8517)">&lt;not set&gt;</span>
<span class="t dlg" style="left:778.7px;top:754.03px;transform:scaleX(0.8737)">secretary</span>
<span class="t dlg" style="left:1020.5px;top:754.03px;transform:scaleX(0.8517)">&lt;not set&gt;</span>
<span class="t dlg" style="left:778.7px;top:788.03px;transform:scaleX(0.8666)">securityIdentifier</span>
<span class="t dlg" style="left:1020.5px;top:788.03px;transform:scaleX(0.8517)">&lt;not set&gt;</span>
<span class="t dlg" style="left:778.7px;top:822.03px;transform:scaleX(0.8594)">seeAlso</span>
<span class="t dlg" style="left:1020.5px;top:822.03px;transform:scaleX(0.8517)">&lt;not set&gt;</span>
<span class="t dlg" style="left:778.7px;top:856.03px;transform:scaleX(0.8534)">serialNumber</span>
<span class="t dlg" style="left:1020.5px;top:856.03px;transform:scaleX(0.8517)">&lt;not set&gt;</span>
<span class="t dlg" style="left:778.7px;top:890.03px;transform:scaleX(0.8695)">servicePrincipalName</span>
<span class="t dlg" style="left:1020.5px;top:890.03px;transform:scaleX(0.8517)">&lt;not set&gt;</span></div>
</div>
</body>
</html>
